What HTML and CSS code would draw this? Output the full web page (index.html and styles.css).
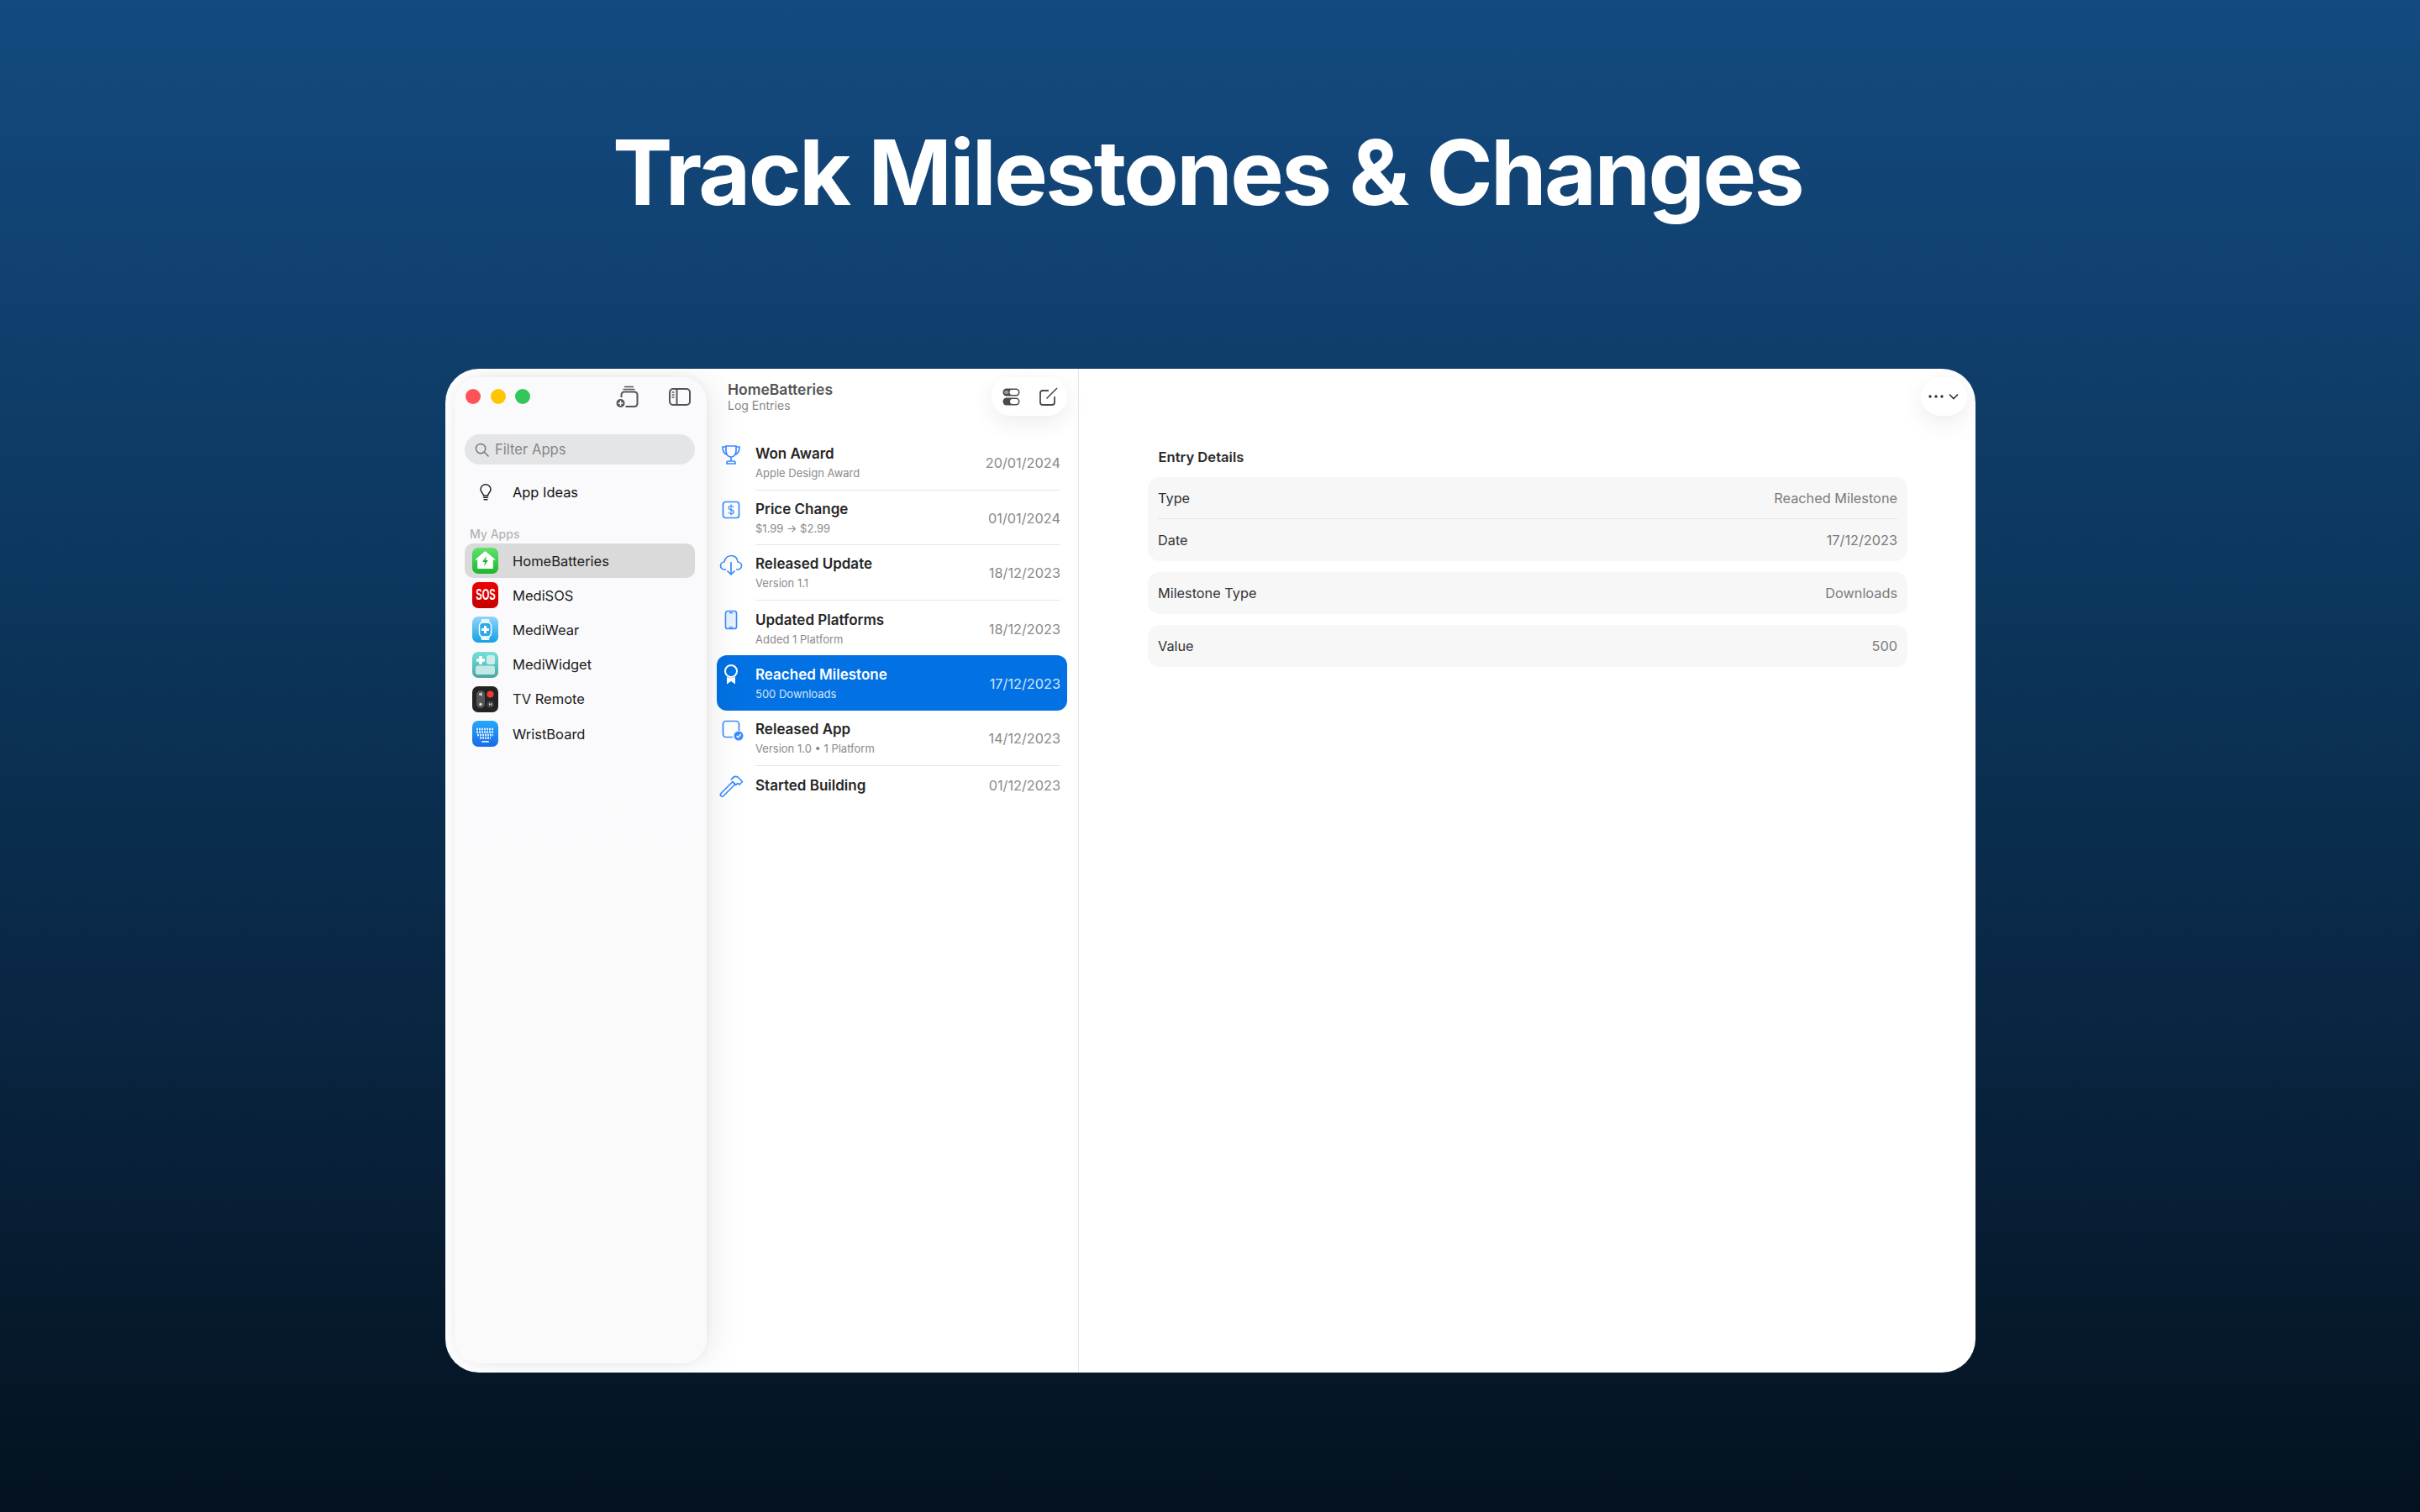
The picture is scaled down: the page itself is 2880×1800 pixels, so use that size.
FILE: index.html
```html
<!DOCTYPE html>
<html lang="en">
<head>
  <meta charset="UTF-8" />
  <title>Track Milestones &amp; Changes</title>
  <link rel="stylesheet" href="styles.css">
</head>
<body>
  <h1 class="headline">Track Milestones &amp; Changes</h1>

  <div class="window">
    <!-- Sidebar -->
    <aside class="sidebar">
      <div class="titlebar">
        <span class="light light-red"></span>
        <span class="light light-yellow"></span>
        <span class="light light-green"></span>
        <svg class="tool-add" viewBox="0 0 27 27" fill="none" stroke="#555" stroke-width="2">
          <path d="M10 1.500h11M8.500 4.500h14" stroke-width="1.400"/>
          <path d="M6.500 14v-3a3.500 3.500 0 0 1 3.500-3.500h12a3.500 3.500 0 0 1 3.500 3.500v10.500a3.500 3.500 0 0 1-3.500 3.500h-10.500"/>
          <circle cx="5.500" cy="21" r="5" fill="#555" stroke="none"/>
          <path d="M5.500 18v6M2.500 21h6" stroke="#fff" stroke-width="1.500"/>
        </svg>
        <svg class="tool-side" viewBox="0 0 26 21" fill="none" stroke="#555" stroke-width="2">
          <rect x="1" y="1" width="24" height="19" rx="4"/>
          <path d="M9.500 1v19"/>
          <path d="M3.500 5h3M3.500 8h3M3.500 11h3" stroke-width="1.300"/>
        </svg>
      </div>

      <div class="search">
        <svg class="search-icon" viewBox="0 0 18 18" fill="none" stroke="#777" stroke-width="1.600">
          <circle cx="7.500" cy="7.500" r="6"/>
          <path d="M12 12l5 5" stroke-linecap="round"/>
        </svg>
        <span>Filter Apps</span>
      </div>

      <div class="ideas">
        <svg class="ideas-icon" viewBox="0 0 14 20" fill="none" stroke="#222" stroke-width="1.500">
          <path d="M4.500 14c0-2.500-3.500-3.800-3.500-7.600a6 5.600 0 0 1 12 0c0 3.800-3.500 5.100-3.500 7.600z"/>
          <path d="M4.500 16.300h5M5.200 18.800h3.600" stroke-linecap="round"/>
        </svg>
        <span>App Ideas</span>
      </div>

      <div class="group-label">My Apps</div>

      <ul class="apps">
        <li class="app app-active">
          <svg class="app-icon" viewBox="0 0 31 31">
            <defs><linearGradient id="gGreen" x1="0" y1="0" x2="0" y2="1"><stop offset="0" stop-color="#5fe36c"/><stop offset="1" stop-color="#1eb52f"/></linearGradient></defs>
            <rect width="31" height="31" rx="7" fill="url(#gGreen)"/>
            <path d="M15.500 4L28 14.500h-3.200V25H6.200V14.500H3z" fill="#fff"/>
            <path d="M17 10l-5 7h3l-1 5 5-7h-3z" fill="#25b937"/>
          </svg>
          <span>HomeBatteries</span>
        </li>
        <li class="app">
          <span class="app-icon sos"><span class="sos-text">SOS</span></span>
          <span>MediSOS</span>
        </li>
        <li class="app">
          <svg class="app-icon" viewBox="0 0 31 31">
            <defs><linearGradient id="gSky" x1="0" y1="0" x2="0" y2="1"><stop offset="0" stop-color="#8fd5fb"/><stop offset="1" stop-color="#12a2e4"/></linearGradient></defs>
            <rect width="31" height="31" rx="7" fill="url(#gSky)"/>
            <path d="M11 3h9l1 5H10zM10 23h11l-1 5h-9z" fill="#e6f6fe"/>
            <rect x="8.500" y="7" width="14" height="17" rx="4.500" fill="#2fa9e6" stroke="#fff" stroke-width="1.500"/>
            <path d="M15.500 11v9M11 15.500h9" stroke="#fff" stroke-width="3"/>
          </svg>
          <span>MediWear</span>
        </li>
        <li class="app">
          <svg class="app-icon" viewBox="0 0 31 31">
            <defs><linearGradient id="gTeal" x1="0" y1="0" x2="0" y2="1"><stop offset="0" stop-color="#72e0da"/><stop offset="1" stop-color="#4aa6a2"/></linearGradient></defs>
            <rect width="31" height="31" rx="7" fill="url(#gTeal)"/>
            <path d="M10 5v10M5 10h10" stroke="#fff" stroke-width="3.500"/>
            <rect x="17" y="4" width="10" height="11" rx="2.500" fill="#cdeeea"/>
            <rect x="4" y="16.500" width="23" height="10.500" rx="2.500" fill="#c4e8e4"/>
          </svg>
          <span>MediWidget</span>
        </li>
        <li class="app">
          <svg class="app-icon" viewBox="0 0 31 31">
            <rect width="31" height="31" rx="7" fill="#232323"/>
            <rect x="5" y="5" width="10" height="21" rx="5" fill="#555"/>
            <path d="M8 8.500h1.500L11.500 7v5L9.500 10.500H8z" fill="#ddd"/>
            <circle cx="10" cy="21.500" r="1.800" fill="#ddd"/>
            <circle cx="21.500" cy="9.500" r="4" fill="#ef3a36"/>
            <circle cx="21.500" cy="21.500" r="4" fill="#444"/>
            <path d="M20 20v3l2-1.500zM22.500 20h1v3h-1z" fill="#ddd"/>
          </svg>
          <span>TV Remote</span>
        </li>
        <li class="app">
          <svg class="app-icon" viewBox="0 0 31 31">
            <defs><linearGradient id="gBlue" x1="0" y1="0" x2="0" y2="1"><stop offset="0" stop-color="#25a8fb"/><stop offset="1" stop-color="#1a6be6"/></linearGradient></defs>
            <rect width="31" height="31" rx="7" fill="url(#gBlue)"/>
            <path d="M5 10h21M5 13.500h21M6 17h19M9 20.500h13" stroke="#dff0ff" stroke-width="2.400" stroke-dasharray="2 1"/>
            <rect x="11" y="24" width="9" height="1.800" rx="0.900" fill="#dff0ff"/>
          </svg>
          <span>WristBoard</span>
        </li>
      </ul>
    </aside>

    <!-- Log entries -->
    <section class="log">
      <header class="log-header">
        <div class="log-app">HomeBatteries</div>
        <div class="log-sub">Log Entries</div>
      </header>

      <div class="pill pill-log">
        <svg class="pill-toggle" viewBox="0 0 21 21">
          <rect x="0.500" y="0.500" width="20" height="9" rx="4.500" fill="#4a4a4a"/>
          <rect x="8.500" y="2" width="10.500" height="6" rx="3" fill="#fff"/>
          <rect x="2" y="3" width="5.500" height="4" rx="2" fill="#999"/>
          <rect x="0.500" y="11.500" width="20" height="9" rx="4.500" fill="#4a4a4a"/>
          <rect x="9" y="13" width="10" height="6" rx="3" fill="#fff"/>
        </svg>
        <svg class="pill-edit" viewBox="0 0 22 22" fill="none" stroke="#4a4a4a" stroke-width="1.800">
          <path d="M11 4H4a3 3 0 0 0-3 3v11a3 3 0 0 0 3 3h11a3 3 0 0 0 3-3v-7"/>
          <path d="M8.500 13.500L21 1" stroke-width="1.600"/>
        </svg>
      </div>

      <ul class="entries">
        <li class="entry">
          <svg class="entry-icon" viewBox="0 0 34 30" fill="none" stroke="#3b8cff" stroke-width="1.700">
            <path d="M11 5h12v6c0 4-2.500 7-6 7s-6-3-6-7zM11 6H7c0 5 1 8 5.500 9.500M23 6h4c0 5-1 8-5.500 9.500M17 18v5M12 26v-1.500a1.500 1.500 0 0 1 1.500-1.500h7a1.500 1.500 0 0 1 1.500 1.500V26z"/>
          </svg>
          <div class="entry-body">
            <div class="entry-text"><div class="entry-title">Won Award</div><div class="entry-sub">Apple Design Award</div></div>
            <div class="entry-date">20/01/2024</div>
          </div>
        </li>
        <li class="entry">
          <svg class="entry-icon" viewBox="0 0 34 30" fill="none" stroke="#3b8cff" stroke-width="1.700">
            <rect x="7.500" y="5.500" width="19" height="19" rx="3"/>
            <path d="M20 12c-.5-1.300-1.600-1.800-3-1.800-1.700 0-3 .8-3 2.200 0 3.200 6.200 1.800 6.200 5 0 1.500-1.400 2.300-3.200 2.300-1.500 0-2.800-.7-3.200-2M17 8.500v13" stroke-width="1.100"/>
          </svg>
          <div class="entry-body">
            <div class="entry-text"><div class="entry-title">Price Change</div><div class="entry-sub">$1.99 → $2.99</div></div>
            <div class="entry-date">01/01/2024</div>
          </div>
        </li>
        <li class="entry">
          <svg class="entry-icon" viewBox="0 0 34 30" fill="none" stroke="#3b8cff" stroke-width="1.700" stroke-linejoin="round">
            <path d="M11 21H9.500C6.500 21 4.500 19 4.500 16.500S6.500 12 9 12c.5-4 3.500-7.500 8-7.500s7.500 3 8 7.500c2.500 0 4.500 2 4.500 4.500S27.500 21 24.500 21H23"/>
            <path d="M17 12v14.500M12.500 22.500l4.500 4.500 4.500-4.500"/>
          </svg>
          <div class="entry-body">
            <div class="entry-text"><div class="entry-title">Released Update</div><div class="entry-sub">Version 1.1</div></div>
            <div class="entry-date">18/12/2023</div>
          </div>
        </li>
        <li class="entry">
          <svg class="entry-icon" viewBox="0 0 34 30" fill="none" stroke="#3b8cff" stroke-width="1.700">
            <rect x="10.500" y="4.500" width="13" height="21" rx="2.500"/>
            <path d="M15 6.500h4M14.500 24h5" stroke-width="1.300"/>
            <rect x="12" y="6" width="10" height="18" fill="#3b8cff" fill-opacity="0.120" stroke="none"/>
          </svg>
          <div class="entry-body">
            <div class="entry-text"><div class="entry-title">Updated Platforms</div><div class="entry-sub">Added 1 Platform</div></div>
            <div class="entry-date">18/12/2023</div>
          </div>
        </li>
        <li class="entry entry-active">
          <svg class="entry-icon" viewBox="0 0 34 30" fill="none" stroke="#fff" stroke-width="2">
            <circle cx="17" cy="11" r="7"/>
            <path d="M12 18v8.500l5-3.500 5 3.500V18c-3 1.500-7 1.500-10 0z" fill="#fff" stroke="none"/>
          </svg>
          <div class="entry-body">
            <div class="entry-text"><div class="entry-title">Reached Milestone</div><div class="entry-sub">500 Downloads</div></div>
            <div class="entry-date">17/12/2023</div>
          </div>
        </li>
        <li class="entry">
          <svg class="entry-icon" viewBox="0 0 34 30" fill="none" stroke="#3b8cff" stroke-width="1.700">
            <path d="M19 23.500h-8a3.500 3.500 0 0 1-3.500-3.500V8A3.500 3.500 0 0 1 11 4.500h12A3.500 3.500 0 0 1 26.500 8v8"/>
            <circle cx="26" cy="22" r="5.500" fill="#3b8cff" stroke="none"/>
            <path d="M23.500 22l2 2 3-4" stroke="#fff" stroke-width="1.400"/>
          </svg>
          <div class="entry-body">
            <div class="entry-text"><div class="entry-title">Released App</div><div class="entry-sub">Version 1.0 • 1 Platform</div></div>
            <div class="entry-date">14/12/2023</div>
          </div>
        </li>
        <li class="entry entry-last">
          <svg class="entry-icon" viewBox="0 0 34 30" fill="none" stroke="#3b8cff" stroke-width="1.700" stroke-linejoin="round">
            <path d="M5 24.500l14-14 3 3-14 14c-1 1-2 1-3 0s-1-2 0-3z"/>
            <path d="M17 8.500c2-3 5-5 8-3.500l5.500 5.500-3.500 3.500-2-1.500-2.500 2-4-4"/>
          </svg>
          <div class="entry-body">
            <div class="entry-text"><div class="entry-title">Started Building</div></div>
            <div class="entry-date">01/12/2023</div>
          </div>
        </li>
      </ul>
    </section>

    <!-- Details -->
    <main class="details">
      <div class="pill pill-more">
        <svg class="pill-dots" viewBox="0 0 18 4" fill="#333">
          <circle cx="2" cy="2" r="1.700"/><circle cx="9" cy="2" r="1.700"/><circle cx="16" cy="2" r="1.700"/>
        </svg>
        <svg class="pill-chevron" viewBox="0 0 12 8" fill="none" stroke="#333" stroke-width="1.600">
          <path d="M1 1.500l5 5 5-5"/>
        </svg>
      </div>

      <h2 class="details-title">Entry Details</h2>

      <div class="card">
        <div class="field field-line"><span>Type</span><span class="field-value">Reached Milestone</span></div>
        <div class="field"><span>Date</span><span class="field-value">17/12/2023</span></div>
      </div>
      <div class="card">
        <div class="field"><span>Milestone Type</span><span class="field-value">Downloads</span></div>
      </div>
      <div class="card">
        <div class="field"><span>Value</span><span class="field-value">500</span></div>
      </div>
    </main>
  </div>
</body>
</html>
```

FILE: styles.css
```css
* {
  box-sizing: border-box;
}

body {
  margin: 0;
  height: 1800px;
  overflow: hidden;
  font-family: Inter, "Liberation Sans", sans-serif;
  background: linear-gradient(#144a80 0%, #0c375e 38%, #09243f 70%, #04121f 100%);
  color: #222;
}

ul {
  list-style: none;
  margin: 0;
  padding: 0;
}

.headline {
  margin: 0;
  height: 439px;
  padding: 139px 6px 0 0;
  text-align: center;
  color: #fff;
  font-size: 107px;
  line-height: 132px;
  font-weight: 700;
  letter-spacing: -2.600px;
}

/* Window */
.window {
  display: flex;
  width: 1821px;
  height: 1195px;
  margin-left: 530px;
  background: #fff;
  border-radius: 40px;
  overflow: hidden;
}

.sidebar {
  flex: none;
  width: 300px;
  margin: 10px 0 11px 11px;
  padding: 0 14px 0 12px;
  background: linear-gradient(#fafafd, #fafafa);
  border-radius: 30px;
  box-shadow: 0 0 12px rgba(0, 0, 0, 0.06), 10px 0 40px rgba(0, 0, 0, 0.07);
  position: relative;
  z-index: 1;
}

.titlebar {
  display: flex;
  align-items: center;
  height: 46px;
  margin-left: 1px;
}

.light {
  flex: none;
  width: 18px;
  height: 18px;
  border-radius: 50%;
  margin-right: 11.500px;
}

.light-red { background: #ff5257; }
.light-yellow { background: #ffc600; }
.light-green { background: #33c759; }

.tool-add {
  flex: none;
  width: 27px;
  height: 27px;
  margin-left: 90px;
}

.tool-side {
  flex: none;
  width: 26px;
  height: 21px;
  margin-left: 36px;
}

.search {
  display: flex;
  align-items: center;
  height: 36px;
  margin-top: 22px;
  padding-left: 12px;
  background: #e4e5e6;
  border-radius: 18px;
  color: #868686;
  font-size: 16.600px;
}

.search-icon {
  width: 17px;
  height: 17px;
  margin-right: 7px;
}

.ideas {
  display: flex;
  align-items: center;
  height: 41px;
  margin-top: 12px;
  font-size: 16.400px;
  color: #111;
}

.ideas-icon {
  width: 14px;
  height: 20px;
  margin: 0 25px 0 18px;
}

.group-label {
  margin: 20px 0 0 6px;
  height: 21px;
  font-size: 14px;
  line-height: 19px;
  font-weight: 500;
  color: #b4b4b4;
}

.app {
  display: flex;
  align-items: center;
  height: 41.200px;
  padding-left: 9px;
  border-radius: 10px;
  font-size: 16.500px;
  color: #1b1b1b;
}

.app-active {
  background: #dadada;
}

.app-icon {
  flex: none;
  width: 31px;
  height: 31px;
  margin-right: 17px;
}

.sos {
  display: flex;
  align-items: center;
  justify-content: center;
  border-radius: 7px;
  background: linear-gradient(#f00000, #c40000);
  color: #fff;
  font-family: "Liberation Sans", sans-serif;
  font-size: 18px;
  font-weight: 700;
}

.sos-text {
  transform: scaleX(0.62);
}

/* Log list */
.log {
  flex: none;
  width: 443px;
  position: relative;
  border-right: 1px solid #e6e6e6;
}

.log-header {
  height: 79px;
  padding: 14px 0 0 25px;
}

.log-app {
  font-size: 17.500px;
  line-height: 22px;
  font-weight: 600;
  color: #555;
}

.log-sub {
  font-size: 14px;
  line-height: 16px;
  color: #888;
}

.pill {
  position: absolute;
  top: 10px;
  height: 46px;
  display: flex;
  align-items: center;
  background: #fff;
  border-radius: 23px;
  box-shadow: 0 8px 28px rgba(0, 0, 0, 0.08);
}

.pill-log {
  left: 339px;
  width: 90px;
  padding-left: 13px;
}

.pill-toggle {
  width: 21px;
  height: 21px;
}

.pill-edit {
  width: 22px;
  height: 22px;
  margin-left: 23px;
}

.entries {
  padding: 0 13px 0 12px;
}

.entry {
  display: flex;
  height: 65.600px;
  border-radius: 12px;
}

.entry-icon {
  flex: none;
  width: 34px;
  height: 30px;
  margin: 8px 12px 0 0;
}

.entry-body {
  flex: 1;
  display: flex;
  align-items: center;
  justify-content: space-between;
  margin-right: 8px;
  padding-top: 2px;
  border-bottom: 1px solid #e5e5e5;
}

.entry-title {
  font-size: 17px;
  line-height: 22px;
  font-weight: 600;
  color: #262626;
}

.entry-sub {
  margin-top: 2px;
  font-size: 13px;
  line-height: 20px;
  color: #8a8a8a;
}

.entry-date {
  font-size: 16.300px;
  color: #8a8a8a;
}

.entry-active {
  background: #0271e3;
}

.entry-active .entry-body {
  border-bottom: none;
}

.entry-active .entry-title {
  color: #fff;
}

.entry-active .entry-sub,
.entry-active .entry-date {
  color: #d4e6fb;
}

.entry:nth-child(4) .entry-body,
.entry-last .entry-body {
  border-bottom: none;
}

.entry-last {
  height: 46px;
}

.entry-last .entry-body {
  padding-top: 0;
}

/* Details */
.details {
  flex: 1;
  position: relative;
  padding: 93px 81px 0 82px;
}

.pill-more {
  left: 1002px;
  width: 55px;
  padding-left: 9px;
}

.pill-dots {
  width: 18px;
  height: 4px;
}

.pill-chevron {
  width: 12px;
  height: 8px;
  margin-left: 6px;
}

.details-title {
  margin: 0 0 12px 12.500px;
  font-size: 16.600px;
  line-height: 24px;
  font-weight: 600;
  color: #2a2a2a;
}

.card {
  margin-bottom: 13px;
  padding: 0 12px;
  background: #f7f7f7;
  border-radius: 14px;
}

.field {
  display: flex;
  align-items: center;
  justify-content: space-between;
  height: 50px;
  font-size: 16.300px;
  color: #333;
}

.field-line {
  border-bottom: 1px solid #e6e6e6;
}

.field-value {
  color: #7b7b7b;
}
```
